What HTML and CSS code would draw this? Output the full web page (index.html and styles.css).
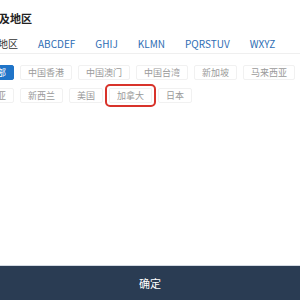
FILE: index.html
```html
<!DOCTYPE html>
<html lang="zh-CN">

<head>
    <meta charset="UTF-8" />
    <meta name="viewport" content="width=device-width, initial-scale=1.0" />
    <title>选择国家及地区</title>
    <link rel="stylesheet" href="styles.css">
</head>

<body>
    <div class="panel">
        <div class="title">国家及地区</div>

        <div class="tabs">
            <span class="tab active">热门地区</span>
            <span class="tab">ABCDEF</span>
            <span class="tab">GHIJ</span>
            <span class="tab">KLMN</span>
            <span class="tab">PQRSTUV</span>
            <span class="tab">WXYZ</span>
        </div>

        <div class="chips">
            <div class="chip-row first">
                <span class="chip selected">全部</span>
                <span class="chip">中国香港</span>
                <span class="chip">中国澳门</span>
                <span class="chip">中国台湾</span>
                <span class="chip">新加坡</span>
                <span class="chip">马来西亚</span>
            </div>
            <div class="chip-row second">
                <span class="chip">澳大利亚</span>
                <span class="chip">新西兰</span>
                <span class="chip">美国</span>
                <span class="chip marked">加拿大</span>
                <span class="chip">日本</span>
            </div>
        </div>

        <div class="footer">确定</div>
    </div>
</body>

</html>
```

FILE: styles.css
```css
html,
body {
    margin: 0;
    padding: 0;
    background: #fff;
    overflow: hidden;
}

body {
    font-family: "Noto Sans CJK SC", "Noto Sans", sans-serif;
    color: #333;
}

.panel {
    height: 100vh;
    display: flex;
    flex-direction: column;
}

.title {
    margin: 12px 0 0 -23px;
    font-size: 11px;
    line-height: 12px;
    font-weight: bold;
    color: #222;
    white-space: nowrap;
}

.tabs {
    display: flex;
    gap: 20px;
    margin-top: 13px;
    padding: 0 0 2px 0;
    border-bottom: 1px solid #efefef;
    font-size: 10px;
    line-height: 14px;
    white-space: nowrap;
}

.tab {
    color: #2e6db4;
}

.tab:first-child {
    margin-left: -22px;
}

.tab.active {
    color: #333;
}

.chips {
    display: flex;
    flex-direction: column;
    gap: 8px;
    margin-top: 11px;
}

.chip-row {
    display: flex;
    gap: 6px;
    white-space: nowrap;
}

.chip-row.first {
    margin-left: -20px;
}

.chip-row.second {
    margin-left: -38px;
}

.chip {
    padding: 0 7px;
    border: 1px solid #f1f1f1;
    border-radius: 2px;
    font-size: 9px;
    line-height: 13px;
    color: #9a9a9a;
}

.chip.selected {
    background: #1f74c8;
    border-color: #1f74c8;
    color: #fff;
}

.chip.marked {
    border-radius: 1px;
    outline: 2px solid #d8332b;
    outline-offset: 2px;
}

.footer {
    margin-top: auto;
    height: 34px;
    line-height: 34px;
    border-top: 1px solid #d3dae3;
    background: #2a3c53;
    color: #fff;
    font-size: 11px;
    text-align: center;
}
```
